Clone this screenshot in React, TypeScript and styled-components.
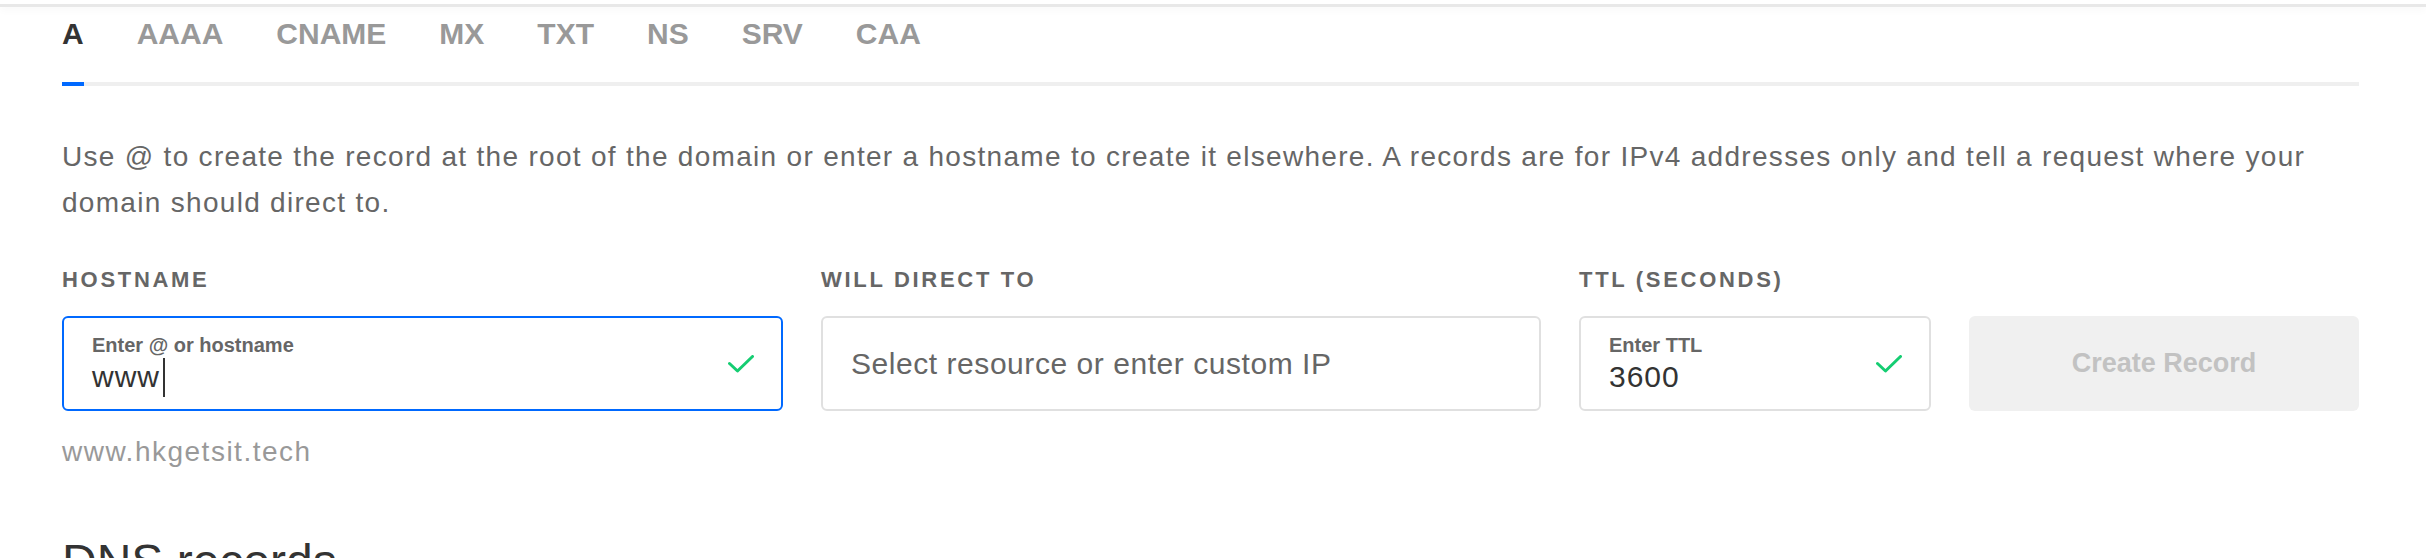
import React from 'react';
import styled, { createGlobalStyle } from 'styled-components';

const GlobalStyle = createGlobalStyle`
  html, body {
    margin: 0;
    padding: 0;
    overflow: hidden;
    background: #fff;
    font-family: 'Liberation Sans', Arial, sans-serif;
  }
`;

const recordTypes = ['A', 'AAAA', 'CNAME', 'MX', 'TXT', 'NS', 'SRV', 'CAA'];

const CheckIcon: React.FC = () => (
  <svg width="26" height="18" viewBox="0 0 26 18" fill="none">
    <polyline
      points="1.5,8.5 9.5,16 24.5,1.5"
      stroke="#15cd72"
      strokeWidth="3"
      strokeLinecap="round"
      strokeLinejoin="round"
    />
  </svg>
);

const App: React.FC = () => {
  return (
    <>
      <GlobalStyle />
      <TopEdge />
      <Page>
        <TabBar>
          {recordTypes.map((type) => (
            <Tab key={type} $active={type === 'A'}>
              {type}
            </Tab>
          ))}
        </TabBar>

        <Description>
          Use @ to create the record at the root of the domain or enter a hostname to create it
          elsewhere. A records are for IPv4 addresses only and tell a request where your domain
          should direct to.
        </Description>

        <FieldGrid>
          <FieldLabel>Hostname</FieldLabel>
          <FieldLabel>Will direct to</FieldLabel>
          <FieldLabel>TTL (seconds)</FieldLabel>
          <div />

          <InputBox $focused>
            <InputText>
              <FloatLabel>Enter @ or hostname</FloatLabel>
              <Value>
                www
                <Caret />
              </Value>
            </InputText>
            <CheckIcon />
          </InputBox>

          <InputBox>
            <Placeholder>Select resource or enter custom IP</Placeholder>
          </InputBox>

          <InputBox>
            <InputText>
              <FloatLabel>Enter TTL</FloatLabel>
              <Value>3600</Value>
            </InputText>
            <CheckIcon />
          </InputBox>

          <CreateButton disabled>Create Record</CreateButton>
        </FieldGrid>

        <Hint>www.hkgetsit.tech</Hint>

        <SectionTitle>DNS records</SectionTitle>
      </Page>
    </>
  );
};

export default App;

const TopEdge = styled.div`
  height: 4px;
  border-bottom: 3px solid #e8e8e8;
  box-shadow: 0 3px 8px rgba(0, 0, 0, 0.03);
`;

const Page = styled.div`
  padding: 12px 67px 0 62px;
`;

const TabBar = styled.ul`
  display: flex;
  gap: 53px;
  margin: 0;
  padding: 0;
  list-style: none;
  border-bottom: 4px solid #efefef;
`;

const Tab = styled.li<{ $active?: boolean }>`
  font-size: 30px;
  line-height: 30px;
  font-weight: 700;
  padding-bottom: 33px;
  margin-bottom: -4px;
  color: ${({ $active }) => ($active ? '#333' : '#999')};
  border-bottom: 4px solid ${({ $active }) => ($active ? '#0069ff' : 'transparent')};
  cursor: pointer;
`;

const Description = styled.p`
  margin: 48px 0 0;
  font-size: 28px;
  line-height: 46px;
  letter-spacing: 1.3px;
  color: #666;
`;

const FieldGrid = styled.div`
  display: grid;
  grid-template-columns: 721px 720px 352px 1fr;
  column-gap: 38px;
  row-gap: 25px;
  margin-top: 43px;
`;

const FieldLabel = styled.div`
  font-size: 22px;
  line-height: 22px;
  font-weight: 700;
  letter-spacing: 2.7px;
  text-transform: uppercase;
  color: #666;
`;

const InputBox = styled.div<{ $focused?: boolean }>`
  box-sizing: border-box;
  height: 95px;
  display: flex;
  align-items: center;
  justify-content: space-between;
  padding: 0 27px 0 28px;
  border: 2px solid ${({ $focused }) => ($focused ? '#0069ff' : '#e0e0e0')};
  border-radius: 6px;
  background: #fff;
`;

const InputText = styled.div`
  display: flex;
  flex-direction: column;
  padding-top: 3px;
`;

const FloatLabel = styled.span`
  font-size: 20px;
  line-height: 20px;
  font-weight: 700;
  color: #666;
`;

const Value = styled.span`
  position: relative;
  align-self: flex-start;
  margin-top: 4px;
  font-size: 30px;
  line-height: 36px;
  letter-spacing: 1px;
  color: #333;
`;

const Caret = styled.span`
  position: absolute;
  left: calc(100% + 3px);
  top: -1px;
  width: 2px;
  height: 39px;
  background: #333;
`;

const Placeholder = styled.span`
  font-size: 30px;
  line-height: 36px;
  letter-spacing: 0.55px;
  color: #666;
`;

const CreateButton = styled.button`
  height: 95px;
  border: none;
  border-radius: 6px;
  background: #f0f0f0;
  color: #c2c2c2;
  font-family: inherit;
  font-size: 27px;
  font-weight: 700;
  cursor: not-allowed;
`;

const Hint = styled.div`
  margin-top: 27px;
  font-size: 28px;
  line-height: 28px;
  letter-spacing: 1.5px;
  color: #999;
`;

const SectionTitle = styled.h2`
  margin: 72px 0 0;
  font-size: 48px;
  line-height: 48px;
  font-weight: 400;
  color: #333;
`;
